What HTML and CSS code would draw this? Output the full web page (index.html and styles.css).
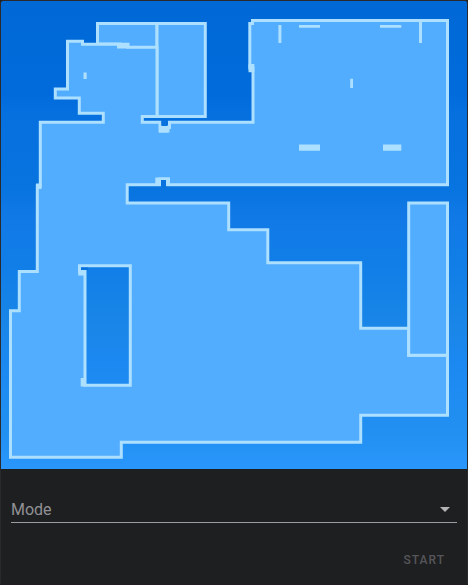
FILE: index.html
```html
<!DOCTYPE html>
<html lang="en">
<head>
<meta charset="utf-8">
<meta name="viewport" content="width=device-width, initial-scale=1">
<title>Vacuum map</title>
<link rel="stylesheet" href="styles.css">
</head>
<body>
<main class="card">
  <svg class="map" viewBox="1 1 466 468" role="img" aria-label="Floor map">
    <defs>
      <linearGradient id="floor" x1="0" y1="0" x2="0" y2="1">
        <stop offset="0" stop-color="#0069d6"/>
        <stop offset="0.2" stop-color="#016bdc"/>
        <stop offset="0.24" stop-color="#0670df"/>
        <stop offset="0.4" stop-color="#0774df"/>
        <stop offset="0.46" stop-color="#1179e6"/>
        <stop offset="0.58" stop-color="#117fe7"/>
        <stop offset="0.7" stop-color="#1a86e8"/>
        <stop offset="0.76" stop-color="#1b88f1"/>
        <stop offset="0.92" stop-color="#2190f1"/>
        <stop offset="1" stop-color="#2a96fc"/>
      </linearGradient>
    </defs>
    <rect x="1" y="1" width="466" height="468" fill="url(#floor)"/>
    <!-- rooms -->
    <g class="room">
      <path d="M97.5 44V23.5H157V47.5H120V44Z"/>
      <path d="M157 23.5H205.3V116.5H157Z"/>
      <path fill-rule="evenodd" d="M67.5 41.3H82.5V44.3H128V47.3H157V116.5H142.3V122.3H160V131H168V127.5H169.5V122.3H253V68H249.8V23.5H252.5V20.5H447.5V184.8H168V179H160V184.8H127.2V203H228.7V229.7H267.8V262.7H360.7V328.3H408.7V355.3H447.5V415.3H360.7V442.3H121.3V457.3H10.5V310.7H19.3V271.5H37.3V186H40.3V122.3H103.3V113.2H79.3V98H55.3V89H67.5ZM79.5 265.7H130.3V385.3H85V271.5H79.5Z"/>
      <path d="M408.7 203H447.5V355.3H408.7Z"/>
    </g>
    <!-- thick wall ends and free-standing obstacles -->
    <path class="wall" d="M117 43H128.5V48.5H117ZM36 183.5H41.5V189H36ZM159 125H168V132.5H159ZM248.5 64H254.3V72.3H248.5ZM251 22H254V25H251ZM155.3 177.5H170V186H155.3ZM78.2 270H86V275.5H78.2ZM80.7 378H86V386.5H80.7ZM83.5 72.5H86.7V79H83.5ZM278.4 25H281.4V43H278.4ZM299 25H320V27.7H299ZM380 25H401.3V27.7H380ZM419 20H422V43H419ZM350.2 78.7H353V88H350.2ZM299 144.4H320V150.8H299ZM383 144.4H401.3V150.8H383Z"/>
    <path class="gap" d="M161.4 120H167.6V126H161.4ZM161 180H166V187H161ZM81 267.5H88V270H81Z"/>
  </svg>
  <form class="controls">
    <div class="field">
      <label class="field-label" for="mode">Mode</label>
      <select class="field-select" id="mode">
        <option value="" selected></option>
      </select>
      <svg class="field-arrow" viewBox="0 0 10 5" aria-hidden="true"><path d="M0 0H10L5 5Z"/></svg>
    </div>
    <div class="actions">
      <button class="start" type="button" disabled>START</button>
    </div>
  </form>
</main>
</body>
</html>
```

FILE: styles.css
```css
* {
  box-sizing: border-box;
}

body {
  margin: 0;
  background: #1c1c1e;
  font-family: Roboto, "Liberation Sans", sans-serif;
}

.card {
  min-height: 100vh;
  overflow: hidden;
  border: 1px solid #2a2a2d;
  border-bottom-color: #211c24;
  border-radius: 3px;
  background: #1e1f21;
}

.map {
  display: block;
  width: 100%;
  height: auto;
}

.room {
  fill: #53adff;
  stroke: #addfff;
  stroke-width: 3;
}

.wall {
  fill: #addfff;
}

.gap {
  fill: #0873df;
}

.controls {
  padding: 26px 10px 4px;
}

.field {
  position: relative;
  height: 28px;
}

.field-label {
  position: absolute;
  top: 0;
  left: 0;
  color: #919195;
  font-size: 16px;
  line-height: 30px;
  pointer-events: none;
}

.field-select {
  display: block;
  width: 100%;
  height: 28px;
  padding: 0;
  border: 0;
  border-bottom: 1px solid #9b9ba1;
  border-radius: 0;
  background: transparent;
  color: #e1e1e1;
  font: inherit;
  font-size: 16px;
  appearance: none;
}

.field-arrow {
  position: absolute;
  top: 12px;
  right: 7px;
  width: 10px;
  height: 5px;
  fill: #b4b4b6;
  pointer-events: none;
}

.actions {
  display: flex;
  justify-content: flex-end;
  padding-top: 19px;
}

.start {
  height: 36px;
  padding: 0 12px;
  border: 0;
  background: transparent;
  color: #56565a;
  font: inherit;
  font-size: 12px;
  font-weight: 500;
  letter-spacing: 1px;
}
```
